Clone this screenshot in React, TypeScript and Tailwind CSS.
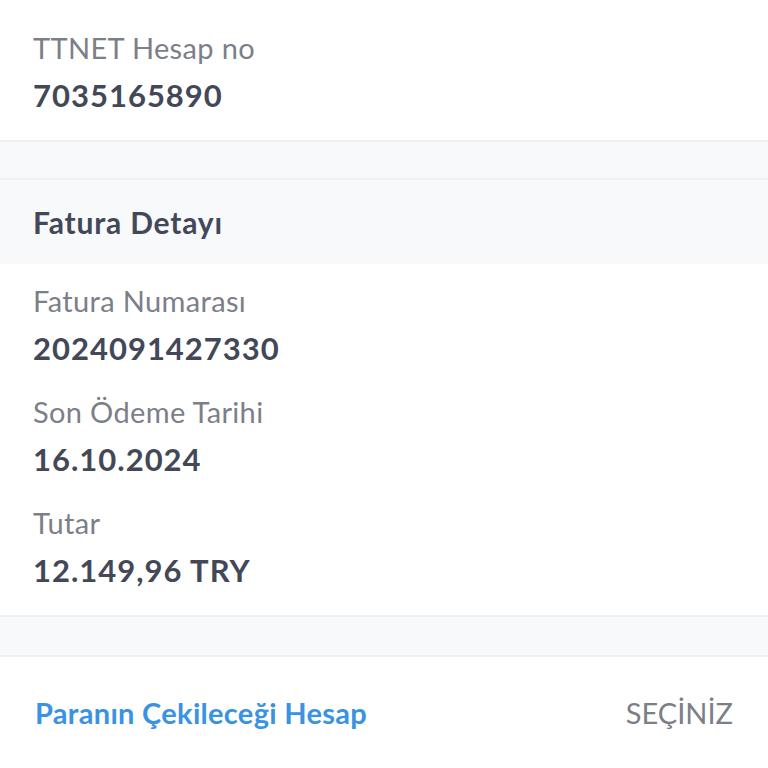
import React from "react";

const font = { fontFamily: "Lato, 'Noto Sans', sans-serif" };

function Field({ label, value }: { label: string; value: string }) {
  return (
    <div className="flex flex-col">
      <div className="text-[29px] leading-[36px] tracking-[0.35px] text-[#7c7f88]">{label}</div>
      <div className="mt-[10px] text-[31px] leading-[38px] font-bold tracking-[1px] text-[#434858]">{value}</div>
    </div>
  );
}

export default function App() {
  return (
    <div className="w-[768px] h-[768px] bg-white overflow-hidden" style={font}>
      <div className="px-[33px] pt-[30px] h-[140px]">
        <Field label="TTNET Hesap no" value="7035165890" />
      </div>
      <div className="h-[40px] bg-[#f8f9fb] border-t-2 border-b-2 border-[#eff0f3]" />
      <div className="h-[84px] bg-[#f8f9fb] px-[33px] flex items-center">
        <div className="text-[30px] font-bold tracking-[0.8px] text-[#434858]">Fatura Detayı</div>
      </div>
      <div className="px-[33px] pt-[19px] h-[351px] flex flex-col gap-[27px]">
        <Field label="Fatura Numarası" value="2024091427330" />
        <Field label="Son Ödeme Tarihi" value="16.10.2024" />
        <Field label="Tutar" value="12.149,96 TRY" />
      </div>
      <div className="h-[42px] bg-[#f8f9fb] border-t-2 border-b-2 border-[#eff0f3]" />
      <div className="h-[112px] pl-[35px] pr-[35px] flex items-center justify-between">
        <div className="text-[29px] font-bold tracking-[0.3px] text-[#3a93e2]">Paranın Çekileceği Hesap</div>
        <div className="text-[29px] text-[#7c7f88]">SEÇİNİZ</div>
      </div>
    </div>
  );
}
